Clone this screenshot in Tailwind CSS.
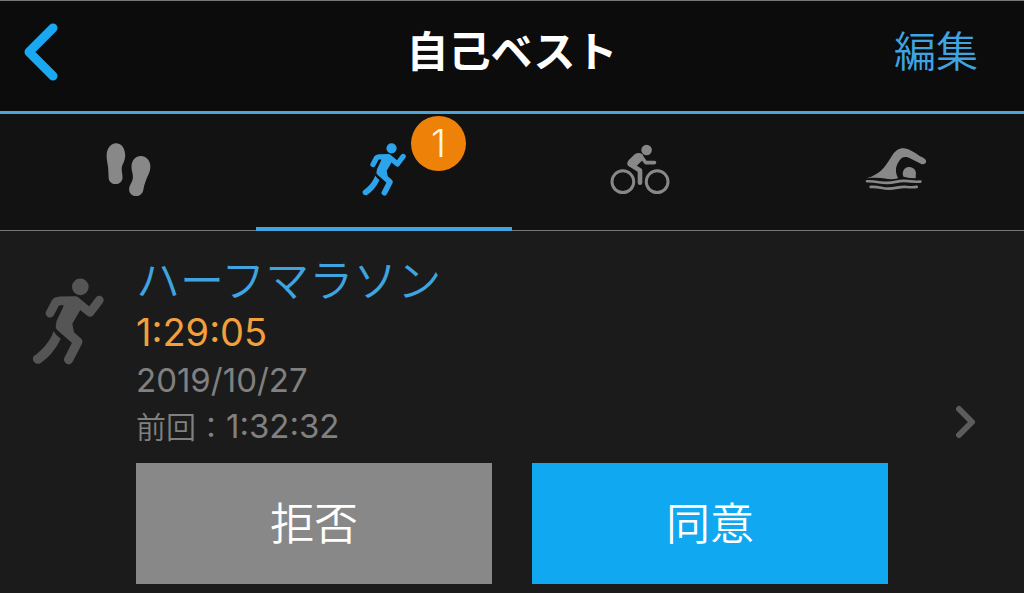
<!DOCTYPE html>
<html lang="ja">
<head>
  <meta charset="UTF-8">
  <meta name="viewport" content="width=device-width, initial-scale=1.0">
  <title>自己ベスト</title>
  <script src="https://cdn.jsdelivr.net/npm/@tailwindcss/browser@4"></script>
</head>
<body class="flex min-h-screen flex-col bg-[#1b1b1b] font-['Inter','Noto_Sans_CJK_JP',sans-serif]">
  <!-- Shared icons -->
  <svg class="hidden">
    <symbol id="runner" viewBox="66 84 216 260">
      <circle cx="211" cy="110" r="25" fill="currentColor"/>
      <g fill="none" stroke="currentColor" stroke-width="26" stroke-linecap="round" stroke-linejoin="round">
        <path d="M120 189 L137 157 Q140 153 150 152 L196 151 L240 187 L268 150"/>
        <path stroke-width="28" d="M151 229 L203 275 L176 328"/>
      </g>
      <path fill="currentColor" d="M160 150 H200 L213 176 L187 221 L192 246 L150 240 Q134 226 140 212 L160 170 Z"/>
      <path fill="currentColor" d="M131 243 Q138 256 152 266 C138 296 118 322 91 339 C78 346 63 331 71 318 C96 300 120 275 131 243 Z"/>
    </symbol>
  </svg>

  <header class="grid h-[114px] grid-cols-[1fr_auto_1fr] items-center border-t border-b-3 border-t-[#777] border-b-[#4fa3d8] bg-[#0c0c0c] pb-2">
    <button type="button" aria-label="戻る" class="ml-6 justify-self-start text-[#1ba8f2]">
      <svg class="h-[58px] w-[34px]" viewBox="0 0 34 58" fill="none" stroke="currentColor" stroke-width="9" stroke-linecap="round" stroke-linejoin="round">
        <path d="M29 5 L5 29 L29 53"/>
      </svg>
    </button>
    <h1 class="text-[42px] leading-[60px] font-bold text-white">自己ベスト</h1>
    <button type="button" class="mr-[46px] justify-self-end text-[42px] leading-[60px] font-[350] text-[#3fa4e0]">編集</button>
  </header>

  <nav class="grid h-[117px] grid-cols-4 border-b border-[#777] bg-[#121212] text-[#888]">
    <a href="#walk" aria-label="ウォーキング" class="flex items-center justify-center pb-1.5">
      <svg class="h-[53px] w-[45px]" viewBox="48 38 134 160" fill="currentColor">
        <path d="M77 39 C62 39 49 54 49 76 C49 95 54 105 54 120 L55 142 C55 154 64 162 76 162 C88 162 97 154 97 142 C97 130 93 122 95 110 C98 98 105 92 105 74 C104 52 93 39 77 39 Z"/>
        <path d="M152 77 C136 77 124 90 124 110 C124 125 130 132 128 145 C126 158 117 165 117 178 C117 190 126 198 138 198 C150 198 158 190 160 178 C162 165 168 150 172 140 C178 128 181 120 181 108 C181 90 168 77 152 77 Z"/>
      </svg>
    </a>
    <a href="#run" aria-label="ランニング" aria-current="page" class="relative -mb-px flex items-center justify-center border-b-4 border-[#3fa4e0] pb-0.5 text-[#2ca3ea]">
      <svg class="h-[53px] w-[44px]"><use href="#runner"/></svg>
      <span class="absolute top-0.5 left-1/2 ml-[27px] flex size-[55px] items-center justify-center rounded-full bg-[#ee8208] text-[38px] font-[350] text-[#fff6ea]">1</span>
    </a>
    <a href="#bike" aria-label="サイクリング" class="flex items-center justify-center pb-1.5">
      <svg class="h-[51px] w-[60px]" viewBox="60 42 182 154" fill="none" stroke="currentColor" stroke-linecap="round" stroke-linejoin="round">
        <circle cx="99" cy="156" r="33" stroke-width="9"/>
        <circle cx="203" cy="156" r="33" stroke-width="9"/>
        <circle cx="171" cy="60" r="16" fill="currentColor" stroke="none"/>
        <path stroke-width="11" d="M154 78 L168 98 H195"/>
        <path stroke-width="14" d="M121 103 L151 122 V159"/>
        <path fill="currentColor" stroke-width="8" d="M137 76 Q147 70 156 76 L158 86 L137 106 L130 110 L117 104 Q115 99 119 94 Z"/>
      </svg>
    </a>
    <a href="#swim" aria-label="スイミング" class="flex items-center justify-center pb-1.5">
      <svg class="h-[44px] w-[62px]" viewBox="45 53 187 132" fill="currentColor">
        <path d="M50 147 C90 134 102 118 125 81 C138 61 150 55 166 57 C185 60 203 77 224 87 C235 94 228 109 215 104 L182 87 C166 80 157 82 149 93 C136 111 135 128 145 147 C130 151 118 151 105 148 C90 145 72 145 50 147 Z"/>
        <path d="M161 142 A20 20 0 1 1 198 138 L198 147 Q178 147 161 142 Z"/>
        <g fill="none" stroke="currentColor" stroke-width="8" stroke-linecap="round">
          <path d="M51 156 C80 155 92 162 113 161 C135 160 145 154 165 155 C182 157 195 158 212 157"/>
          <path d="M62 173 C85 171 96 178 116 178 C138 178 148 172 166 173 C180 174 190 175 201 173"/>
        </g>
      </svg>
    </a>
  </nav>

  <main class="flex flex-1 pt-6 pr-12 pb-2 pl-8">
    <svg class="mt-[23px] h-[87px] w-[72px] shrink-0 text-[#555]"><use href="#runner"/></svg>
    <div class="ml-8 flex-1">
      <h2 class="text-[44px] leading-[52px] font-[350] text-[#3fa4e0]">ハーフマラソン</h2>
      <p class="text-[38px] leading-[50px] text-[#f2a03d]">1:29:05</p>
      <p class="text-[33px] leading-[46px] text-[#808080]">2019/10/27</p>
      <p class="text-[33px] leading-[46px] text-[#808080]"><span class="text-[30px] font-[350]">前回：</span>1:32:32</p>
      <div class="mt-[13px] grid grid-cols-2 gap-10 text-[44px] font-[350] text-white">
        <button type="button" class="h-[121px] bg-[#888]">拒否</button>
        <button type="button" class="h-[121px] bg-[#10a8f0]">同意</button>
      </div>
    </div>
    <a href="#detail" aria-label="詳細" class="ml-[67px] self-center pt-1 text-[#5c5c5c]">
      <svg class="h-[34px] w-[21px]" viewBox="0 0 21 34" fill="none" stroke="currentColor" stroke-width="6" stroke-linecap="round" stroke-linejoin="round">
        <path d="M4 4 L17 17 L4 30"/>
      </svg>
    </a>
  </main>
</body>
</html>
